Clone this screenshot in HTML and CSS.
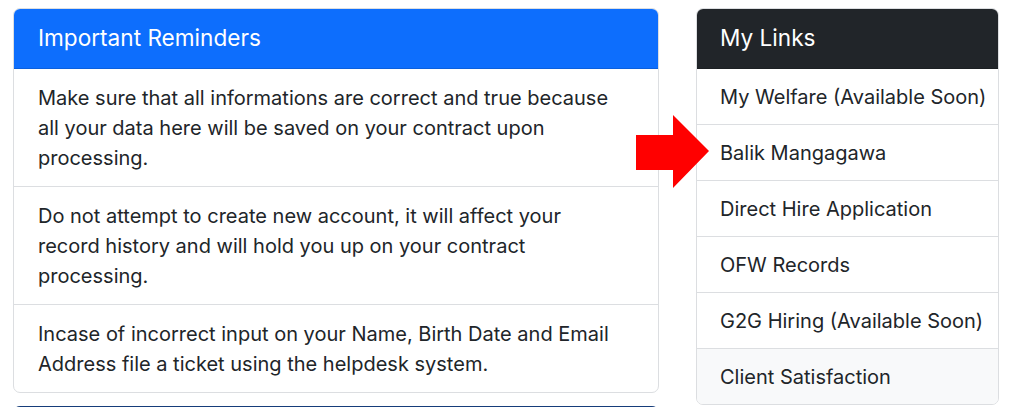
FILE: index.html
```html
<!DOCTYPE html>
<html>
<head>
<meta charset="utf-8">
<link rel="stylesheet" href="styles.css">
</head>
<body>
<div class="page">
  <div class="col-main">
    <div class="card">
      <div class="card-header header-primary">Important Reminders</div>
      <ul class="list">
        <li class="item item-main">Make sure that all informations are correct and true because all your data here will be saved on your contract upon processing.</li>
        <li class="item item-main">Do not attempt to create new account, it will affect your record history and will hold you up on your contract processing.</li>
        <li class="item item-main">Incase of incorrect input on your Name, Birth Date and Email Address file a ticket using the helpdesk system.</li>
      </ul>
    </div>
    <div class="next-card"></div>
  </div>
  <div class="col-side">
    <svg class="arrow" width="74" height="74" viewBox="0 0 74 74">
      <polygon points="0,20 37,20 37,0 73,36 37,73 37,55 0,55" fill="#ff0000"/>
    </svg>
    <div class="card">
      <div class="card-header header-dark">My Links</div>
      <ul class="list">
        <li class="item item-side">My Welfare (Available Soon)</li>
        <li class="item item-side">Balik Mangagawa</li>
        <li class="item item-side">Direct Hire Application</li>
        <li class="item item-side">OFW Records</li>
        <li class="item item-side">G2G Hiring (Available Soon)</li>
        <li class="item item-side item-light">Client Satisfaction</li>
      </ul>
    </div>
  </div>
</div>
</body>
</html>
```

FILE: styles.css
```css
* { box-sizing: border-box; }
html, body {
  margin: 0;
  padding: 0;
  background: #ffffff;
  overflow: hidden;
}
body {
  font-family: Inter, "Liberation Sans", Arial, sans-serif;
  color: #212529;
  font-size: 20px;
}
.page {
  display: flex;
  align-items: flex-start;
  padding: 8px 25px 0 13px;
  gap: 37px;
  height: 407px;
}
.col-main {
  width: 646px;
  display: flex;
  flex-direction: column;
  gap: 13px;
}
.col-side {
  width: 303px;
  position: relative;
}
.arrow {
  position: absolute;
  left: -60px;
  top: 107px;
}
.card {
  border: 1px solid #dcdee1;
  border-radius: 7px;
  overflow: hidden;
  background: #fff;
}
.card-header {
  color: #fff;
  font-size: 22.6px;
  line-height: 34px;
  padding: 12px 24px 13px;
  border-bottom: 1px solid rgba(0,0,0,0.125);
}
.header-dark { padding-left: 23px; }
.header-primary { background: #0d6efd; }
.header-dark { background: #212529; }
.list {
  list-style: none;
  margin: 0;
  padding: 0;
}
.item {
  line-height: 30px;
  padding: 12.5px 23px;
  border-top: 1px solid #dcdee1;
}
.item:first-child { border-top: none; }
.item-main { padding: 13.5px 40px 13.5px 24px; }
.item-side { white-space: nowrap; }
.item-light { background: #f8f9fa; }
.next-card {
  height: 20px;
  border-radius: 7px 7px 0 0;
  background: #1f4f97;
  border-top: 2px solid #163d7a;
}
```
